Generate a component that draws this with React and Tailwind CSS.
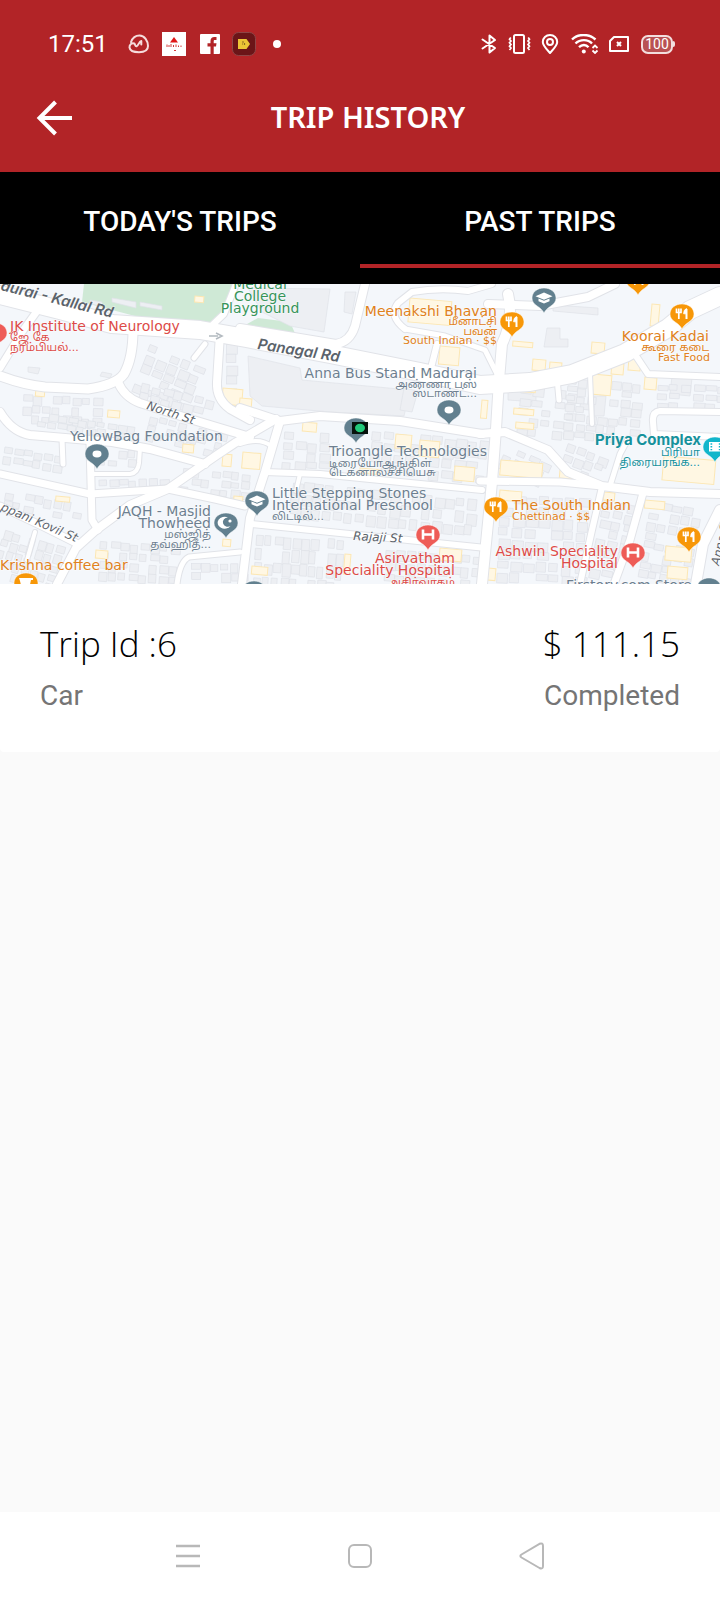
import React from "react";

const ROAD_PATHS = [
  { d: "M45 16 L22 48 L0 84", w: 8 },
  { d: "M0 92 Q24 101 45 103 L88 105 Q116 101 124 90 Q133 74 133 46", w: 10 },
  { d: "M118 98 Q124 113 140 119 L190 135 L250 153", w: 9 },
  { d: "M0 128 Q12 148 30 151 L112 158 L150 165 L205 180", w: 9 },
  { d: "M62 155 L63 180", w: 6 },
  { d: "M92 190 L130 190 Q138 189 139 179 L140 164", w: 5 },
  { d: "M0 190 L90 210 L168 205 L215 215 L245 222", w: 8 },
  { d: "M90 160 L92 236 L98 246", w: 8 },
  { d: "M57 300 L76 264 L96 246 L130 221 L168 205 L217 171 L235 159 L276 135", w: 9 },
  { d: "M0 222 L44 243 L78 260", w: 8 },
  { d: "M35 248 L27 276", w: 5 },
  { d: "M177 300 Q180 277 189 273 L240 268", w: 6 },
  { d: "M220 50 L217 98 Q216 115 230 125 L250 136", w: 9 },
  { d: "M205 60 L194 74", w: 6 },
  { d: "M205 48 L224 30 L236 0", w: 7 },
  { d: "M365 0 L355 42 Q350 58 336 60 L240 44", w: 9 },
  { d: "M240 124 L280 137 L320 132 L400 137 L482 150", w: 9 },
  { d: "M280 137 L265 188 L250 234 L242 300", w: 9 },
  { d: "M240 160 Q260 153 271 162", w: 5 },
  { d: "M265 188 L320 190 L400 198 L482 206", w: 7 },
  { d: "M252 240 L330 248 L486 264", w: 7 },
  { d: "M300 190 L296 207", w: 5 },
  { d: "M437 60 L430 88", w: 7 },
  { d: "M405 45 Q388 32 398 19 L412 8 Q440 3 468 7 L492 0", w: 7 },
  { d: "M405 45 L445 52 L485 66 L500 96", w: 6 },
  { d: "M508 10 Q514 35 502 60 L499 96 L496 145 L492 198 L482 300", w: 11 },
  { d: "M488 20 L540 22 L588 13 L615 0", w: 9 },
  { d: "M480 150 L505 148 L548 166 L568 188 L602 202 L650 208 L720 210", w: 9 },
  { d: "M480 197 L560 198 L602 202", w: 8 },
  { d: "M602 203 L592 246 L580 300", w: 7 },
  { d: "M643 209 L630 256 L614 300", w: 8 },
  { d: "M610 202 L620 170 L628 155", w: 6 },
  { d: "M557 94 L559 116", w: 6 },
  { d: "M590 90 L592 140", w: 5 },
  { d: "M720 128 L660 127 Q652 128 653 138 L654 150 L720 153", w: 7 },
  { d: "M636 72 L648 90 L720 93", w: 7 },
  { d: "M720 226 L703 260 L696 300", w: 11 },
];

const MAIN_ROAD =
  "M0 11 L60 26 L112 40 L200 46 L246 54 L330 70 L420 88 L480 101 L530 98 L572 90 L625 69 L668 44 L690 26 L720 12";

const BLOCKS = [
  { x: 22, y: 110, cols: 8, rows: 3, w: 10, h: 10, a: 2 },
  { x: 38, y: 128, cols: 10, rows: 2, w: 10, h: 8, a: 8 },
  { x: 4, y: 162, cols: 6, rows: 2, w: 10, h: 9, a: 8 },
  { x: 98, y: 164, cols: 4, rows: 2, w: 10, h: 9, a: 4 },
  { x: 98, y: 196, cols: 7, rows: 1, w: 10, h: 9, a: -2 },
  { x: 5, y: 206, cols: 8, rows: 2, w: 10, h: 10, a: 10 },
  { x: 150, y: 60, cols: 5, rows: 5, w: 12, h: 10, a: 22 },
  { x: 142, y: 98, cols: 7, rows: 2, w: 11, h: 10, a: 14 },
  { x: 150, y: 130, cols: 8, rows: 3, w: 10, h: 9, a: 14 },
  { x: 182, y: 182, cols: 7, rows: 3, w: 10, h: 9, a: 6 },
  { x: 225, y: 58, cols: 1, rows: 6, w: 12, h: 11, a: 0 },
  { x: 100, y: 256, cols: 8, rows: 4, w: 10, h: 10, a: 4 },
  { x: 4, y: 245, cols: 7, rows: 5, w: 9, h: 10, a: 16 },
  { x: 190, y: 278, cols: 6, rows: 2, w: 10, h: 10, a: 0 },
  { x: 284, y: 146, cols: 4, rows: 4, w: 12, h: 10, a: 4 },
  { x: 292, y: 196, cols: 17, rows: 3, w: 11, h: 13, a: 6 },
  { x: 256, y: 249, cols: 10, rows: 4, w: 9, h: 14, a: 4 },
  { x: 385, y: 264, cols: 9, rows: 3, w: 11, h: 12, a: 5 },
  { x: 372, y: 145, cols: 10, rows: 4, w: 12, h: 11, a: 6 },
  { x: 520, y: 102, cols: 6, rows: 5, w: 12, h: 10, a: 6 },
  { x: 567, y: 92, cols: 7, rows: 7, w: 11, h: 9, a: 5 },
  { x: 645, y: 98, cols: 7, rows: 3, w: 12, h: 9, a: 3 },
  { x: 568, y: 158, cols: 4, rows: 3, w: 11, h: 10, a: 20 },
  { x: 500, y: 210, cols: 7, rows: 8, w: 13, h: 11, a: 3 },
  { x: 604, y: 214, cols: 3, rows: 8, w: 12, h: 10, a: 12 },
  { x: 650, y: 216, cols: 5, rows: 8, w: 11, h: 10, a: 10 },
  { x: 508, y: 160, cols: 4, rows: 3, w: 12, h: 9, a: 24 },
];

const YELLOW = [
  [36, 104, 9, 8], [108, 126, 12, 7], [183, 160, 11, 8], [56, 212, 14, 5],
  [96, 266, 12, 8], [223, 104, 20, 16], [223, 170, 9, 12], [234, 212, 9, 10],
  [223, 255, 8, 7], [195, 12, 9, 6], [240, 114, 12, 9], [303, 138, 14, 9],
  [243, 168, 18, 16], [410, 14, 42, 24], [440, 62, 20, 18], [396, 150, 16, 14],
  [420, 156, 20, 16], [345, 270, 6, 20], [252, 282, 16, 8], [440, 264, 22, 12],
  [455, 182, 20, 14], [513, 57, 20, 5], [533, 75, 13, 11], [550, 78, 12, 8],
  [592, 58, 13, 11], [516, 98, 20, 9], [514, 124, 20, 6], [516, 138, 18, 6],
  [592, 90, 20, 20], [612, 79, 12, 11], [629, 74, 12, 12], [645, 93, 12, 12],
  [501, 176, 42, 15], [500, 206, 22, 10], [482, 116, 6, 18], [664, 172, 52, 24],
  [645, 216, 20, 8], [604, 208, 11, 8], [666, 262, 26, 14], [488, 284, 8, 12],
  [652, 20, 8, 22], [560, 186, 12, 8], [668, 282, 20, 12], [360, 184, 20, 5],
];

const LARGE_BUILDINGS = [
  "M248 4 L330 5 L324 48 L290 42 L262 28 Z",
  "M248 72 L300 84 L302 96 L410 106 L404 132 L330 128 L262 122 L250 112 Z",
  "M345 8 L356 8 L352 30 L344 28 Z",
  "M404 104 L418 107 L412 128 L400 126 Z",
  "M553 21 L598 24 L598 31 L553 27 Z",
  "M547 44 L560 44 L560 55 L568 55 L568 63 L544 63 Z",
  "M508 106 L536 108 L536 118 L508 116 Z",
  "M594 112 L606 112 L604 132 L594 132 Z",
  "M672 92 L692 94 L690 112 L670 110 Z",
  "M90 16 L102 18 L102 22 L90 20 Z M112 14 L136 18 L136 24 L112 18 Z M140 18 L162 22 L162 26 L140 22 Z",
  "M28 83 L40 84 L38 90 L28 88 Z M102 88 L112 90 L110 94 L100 92 Z",
];

const PINS = [
  { x: 97, y: 185, color: "#62808f", icon: "dot" },
  { x: 226, y: 254, color: "#62808f", icon: "crescent" },
  { x: 257, y: 232, color: "#62808f", icon: "cap" },
  { x: 356, y: 159, color: "#62808f", icon: "none" },
  { x: 449, y: 141, color: "#62808f", icon: "dot" },
  { x: 428, y: 266, color: "#ee5c57", icon: "hospital" },
  { x: 512, y: 53, color: "#f79708", icon: "food" },
  { x: 544, y: 29, color: "#62808f", icon: "cap" },
  { x: 682, y: 45, color: "#f79708", icon: "food" },
  { x: 638, y: 11, color: "#f79708", icon: "food" },
  { x: 715, y: 178, color: "#12b5cb", icon: "film" },
  { x: 496, y: 238, color: "#f79708", icon: "food" },
  { x: 633, y: 284, color: "#ee5c57", icon: "hospital" },
  { x: 689, y: 268, color: "#f79708", icon: "food" },
  { x: 26, y: 314, color: "#f79708", icon: "cup" },
  { x: -5, y: 64, color: "#ee5c57", icon: "dot" },
  { x: 254, y: 322, color: "#62808f", icon: "none" },
  { x: 709, y: 319, color: "#62808f", icon: "none" },
];

const RED = "#dd4b48";
const ORANGE = "#e08120";
const SLATE = "#6d7f90";
const GREEN = "#37945a";
const TEAL = "#16919c";
const ROAD_TEXT = "#5b636b";

const LABELS = [
  { t: "JK Institute of Neurology", x: 10, y: 47, c: RED },
  { t: "ஜே கே", x: 10, y: 57, c: RED, s: "sm" },
  { t: "நரம்பியல்...", x: 10, y: 67, c: RED, s: "sm" },
  { t: "Medical", x: 260, y: 5, c: GREEN, a: "middle" },
  { t: "College", x: 260, y: 17, c: GREEN, a: "middle" },
  { t: "Playground", x: 260, y: 29, c: GREEN, a: "middle" },
  { t: "Meenakshi Bhavan", x: 497, y: 32, c: ORANGE, a: "end" },
  { t: "மீனாட்சி", x: 497, y: 41, c: ORANGE, a: "end", s: "sm" },
  { t: "பவன்", x: 497, y: 51, c: ORANGE, a: "end", s: "sm" },
  { t: "South Indian · $$", x: 497, y: 60, c: ORANGE, a: "end", s: "sm" },
  { t: "Anna Bus Stand Madurai", x: 477, y: 94, c: SLATE, a: "end" },
  { t: "அண்ணா பஸ்", x: 477, y: 104, c: SLATE, a: "end", s: "sm" },
  { t: "ஸ்டாண்ட்...", x: 477, y: 113, c: SLATE, a: "end", s: "sm" },
  { t: "Koorai Kadai", x: 709, y: 57, c: ORANGE, a: "end" },
  { t: "கூரை கடை", x: 709, y: 67, c: ORANGE, a: "end", s: "sm" },
  { t: "Fast Food", x: 710, y: 77, c: ORANGE, a: "end", s: "sm" },
  { t: "YellowBag Foundation", x: 70, y: 157, c: SLATE },
  { t: "Trioangle Technologies", x: 329, y: 172, c: SLATE },
  { t: "டிரையோஆங்கிள்", x: 329, y: 183, c: SLATE, s: "sm" },
  { t: "டெக்னாலச்சியெசு", x: 329, y: 192, c: SLATE, s: "sm" },
  { t: "Priya Complex", x: 701, y: 161, c: TEAL, a: "end", b: true },
  { t: "பிரியா", x: 700, y: 172, c: TEAL, a: "end", s: "sm" },
  { t: "திரையரங்க...", x: 700, y: 182, c: TEAL, a: "end", s: "sm" },
  { t: "Little Stepping Stones", x: 272, y: 214, c: SLATE },
  { t: "International Preschool", x: 272, y: 226, c: SLATE },
  { t: "லிட்டில்...", x: 272, y: 236, c: SLATE, s: "sm" },
  { t: "JAQH - Masjid", x: 211, y: 232, c: SLATE, a: "end" },
  { t: "Thowheed", x: 211, y: 244, c: SLATE, a: "end" },
  { t: "மஸ்ஜித்", x: 211, y: 254, c: SLATE, a: "end", s: "sm" },
  { t: "தவ்ஹித்...", x: 211, y: 264, c: SLATE, a: "end", s: "sm" },
  { t: "The South Indian", x: 512, y: 226, c: ORANGE },
  { t: "Chettinad · $$", x: 512, y: 236, c: ORANGE, s: "sm" },
  { t: "Ashwin Speciality", x: 618, y: 272, c: RED, a: "end" },
  { t: "Hospital", x: 618, y: 284, c: RED, a: "end" },
  { t: "Asirvatham", x: 455, y: 279, c: RED, a: "end" },
  { t: "Speciality Hospital", x: 455, y: 291, c: RED, a: "end" },
  { t: "அசிர்வாதம்", x: 455, y: 302, c: RED, a: "end", s: "sm" },
  { t: "Krishna coffee bar", x: 0, y: 286, c: ORANGE },
  { t: "Firstory.com Store", x: 692, y: 306, c: SLATE, a: "end" },
  { t: "durai - Kallal Rd", x: 0, y: 6, c: ROAD_TEXT, r: 14, b: true },
  { t: "Panagal Rd", x: 257, y: 65, c: ROAD_TEXT, r: 9, b: true },
  { t: "North St", x: 146, y: 125, c: ROAD_TEXT, r: 18, s: "md" },
  { t: "ppani Kovil St", x: 0, y: 226, c: ROAD_TEXT, r: 23, s: "md" },
  { t: "Rajaji St", x: 353, y: 256, c: ROAD_TEXT, r: 3, s: "md" },
  { t: "Anna Salai", x: 719, y: 282, c: ROAD_TEXT, r: -76, s: "md" },
];

// Small deterministic hash so the building footprints vary in size without changing between renders.
function noise(a, b, c) {
  const v = Math.sin(a * 12.9898 + b * 78.233 + c * 37.719) * 43758.5453;
  return v - Math.floor(v);
}

function BuildingBlock({ block, seed }) {
  const items = [];
  for (let r = 0; r < block.rows; r++) {
    for (let c = 0; c < block.cols; c++) {
      const n = noise(seed, r, c);
      if (n < 0.14) continue;
      items.push(
        <rect
          key={`${r}-${c}`}
          x={c * block.w + n * 2}
          y={r * block.h + noise(c, seed, r) * 3}
          width={block.w * (0.6 + n * 0.35)}
          height={block.h * (0.55 + noise(r, c, seed) * 0.4)}
        />
      );
    }
  }
  return <g transform={`translate(${block.x} ${block.y}) rotate(${block.a})`}>{items}</g>;
}

function PinGlyph({ icon }) {
  if (icon === "dot") return <ellipse cx="0" cy="-15" rx="4.5" ry="3.4" fill="#fff" />;
  if (icon === "hospital")
    return <path d="M-5 -20.5 V-10.5 M5 -20.5 V-10.5 M-5 -15.5 H5" stroke="#fff" strokeWidth="2.6" fill="none" />;
  if (icon === "cap")
    return (
      <g fill="#fff">
        <path d="M0 -20.5 L8.5 -16.8 L0 -13.2 L-8.5 -16.8 Z" />
        <path d="M-5.5 -14.6 L0 -12.2 L5.5 -14.6 V-11.8 L0 -9.4 L-5.5 -11.8 Z" />
      </g>
    );
  if (icon === "crescent")
    return (
      <g>
        <path d="M4.5 -12 A7 6 0 1 1 2 -20.5 A5 4.6 0 1 0 4.5 -12 Z" fill="#fff" />
        <circle cx="4" cy="-17" r="1.6" fill="#fff" />
      </g>
    );
  if (icon === "food")
    return (
      <g stroke="#fff" fill="none">
        <path d="M-5.5 -20.5 V-16.5 H-1 V-20.5 M-3.2 -20.5 V-10" strokeWidth="1.7" />
        <path d="M4.5 -10 V-20" strokeWidth="2" />
        <path d="M4.5 -20.5 Q1.6 -19.4 1.6 -15.2 H4.5 Z" fill="#fff" strokeWidth="0.8" />
      </g>
    );
  if (icon === "film")
    return (
      <g>
        <path d="M-6 -20 H7 V-10.5 H-6 Z" fill="#fff" />
        <path d="M-4.5 -18 H-2.8 M-4.5 -15.2 H-2.8 M-4.5 -12.4 H-2.8 M3.8 -18 H5.5 M3.8 -15.2 H5.5 M3.8 -12.4 H5.5" stroke="#12b5cb" strokeWidth="1.4" />
      </g>
    );
  if (icon === "cup") return <path d="M-7 -20 H7 V-18 H5 L3 -9 H-4 L-6 -17 Z" fill="#fff" />;
  return null;
}

function Pin({ x, y, color, icon }) {
  return (
    <g transform={`translate(${x} ${y})`}>
      <path
        d="M0 0 C-1.2 -2.6 -3.4 -4.6 -6.6 -6.8 C-10.2 -9.2 -12 -11.6 -12 -15 C-12 -20.8 -6.8 -25 0 -25 C6.8 -25 12 -20.8 12 -15 C12 -11.6 10.2 -9.2 6.6 -6.8 C3.4 -4.6 1.2 -2.6 0 0 Z"
        fill={color}
        stroke="#fff"
        strokeOpacity="0.6"
        strokeWidth="0.8"
      />
      <PinGlyph icon={icon} />
    </g>
  );
}

function labelClass(label) {
  if (label.s === "sm") return "text-[11px] font-normal";
  if (label.s === "md") return "text-[12px] font-normal italic";
  if (label.r) return "text-[15px] font-semibold italic";
  return label.b ? "text-[15px] font-bold" : "text-[14px] font-normal";
}

function labelFont(label) {
  if (label.b) return "font-['Inter','Noto_Sans_Tamil',sans-serif]";
  return "font-['DejaVu_Sans','Noto_Sans_Tamil',sans-serif]";
}

function TripMap() {
  return (
    <svg
      viewBox="0 0 720 300"
      preserveAspectRatio="xMidYMid slice"
      role="img"
      aria-label="Map of the trip location"
      className="block h-[300px] w-full bg-[#f1f4f9]"
    >
      <rect width="720" height="300" fill="#f4f7fb" />
      <path d="M84 0 H238 L214 45 L150 36 L82 18 Z" fill="#cfe9d6" />
      <path d="M258 34 L290 38 L298 56 L240 44 Z" fill="#cfe9d6" />
      <g fill="#edeff3" stroke="#dfe2e8" strokeWidth="0.7">
        {LARGE_BUILDINGS.map((d) => (
          <path key={d} d={d} />
        ))}
        {BLOCKS.map((block, i) => (
          <BuildingBlock key={i} block={block} seed={i + 1} />
        ))}
      </g>
      <g fill="#fff7e3" stroke="#fce7b4" strokeWidth="1">
        {YELLOW.map(([x, y, w, h]) => (
          <rect key={`${x}-${y}`} x={x} y={y} width={w} height={h} transform={`rotate(5 ${x} ${y})`} />
        ))}
      </g>
      <g fill="none" strokeLinejoin="round" strokeLinecap="round">
        {ROAD_PATHS.map((road) => (
          <path key={road.d} d={road.d} stroke="#e1e3e8" strokeWidth={road.w + 1} />
        ))}
        <path d={MAIN_ROAD} stroke="#e1e3e8" strokeWidth="20" />
        {ROAD_PATHS.map((road) => (
          <path key={road.d} d={road.d} stroke="#ffffff" strokeWidth={road.w - 1} />
        ))}
        <path d={MAIN_ROAD} stroke="#ffffff" strokeWidth="18" />
      </g>
      <path d="M209 52 H218 M216 49 L222 52 L216 55" stroke="#b3bac0" strokeWidth="1.6" fill="none" />
      {PINS.map((pin) => (
        <Pin key={`${pin.x}-${pin.y}`} {...pin} />
      ))}
      <rect x="352" y="138" width="16" height="12" fill="#06120c" />
      <ellipse cx="360" cy="144" rx="5" ry="4.2" fill="#22c97a" />
      {LABELS.map((label) => (
        <text
          key={label.t}
          x={label.x}
          y={label.y}
          textAnchor={label.a || "start"}
          fill={label.c}
          stroke="#ffffff"
          strokeWidth="1"
          strokeOpacity="0.7"
          paintOrder="stroke"
          transform={label.r ? `rotate(${label.r} ${label.x} ${label.y})` : undefined}
          className={`${labelClass(label)} ${labelFont(label)}`}
        >
          {label.t}
        </text>
      ))}
    </svg>
  );
}

function StatusBar() {
  return (
    <div className="flex h-[88px] items-center justify-between pr-[45px] pl-12 text-white">
      <div className="flex items-center">
        <span className="w-20 font-['Roboto',sans-serif] text-[24px] leading-8">17:51</span>
        <svg viewBox="0 0 22 20" className="h-5 w-[22px]" fill="none" stroke="#f6dcdc" strokeWidth="2" strokeLinecap="round" strokeLinejoin="round">
          <path d="M3 8 C4.500 4 7.500 1.500 11.500 1.500 C16.500 1.500 20 7 20 12 C20 16.500 16 18.200 11 18.200 C6 18.200 2 16.800 1.500 13.500 C1.200 10.500 4 8.500 6.200 9.500 C7.500 10.200 6.800 12.800 8.800 12.200 C10.500 11.500 11 7.500 13.300 7 V10.500" />
        </svg>
        <svg viewBox="0 0 24 24" className="ml-3 size-6">
          <rect width="24" height="24" fill="#fff" />
          <path d="M12 5 L16 10.500 H8 Z" fill="#e01818" />
          <path d="M5 12.500 V15 M7 13 V15 M9 12 V15 M11.500 13 V15 M14 12.500 V15 M16.500 13.500 V15 M19 13.500 V15 M12 18.500 H14" stroke="#d23a3a" strokeWidth="1" />
        </svg>
        <svg viewBox="0 0 20 20" className="ml-3.5 size-5">
          <rect width="20" height="20" rx="1" fill="#fff" />
          <path d="M10.500 20 V12.500 H7.500 V9.300 H10.500 V7 C10.500 4.200 12 3 14.300 3 H16.500 V6 H15 C14 6 13.700 6.500 13.700 7.400 V9.300 H16.500 L16 12.500 H13.700 V20 Z" fill="#b22427" />
        </svg>
        <svg viewBox="0 0 24 24" className="ml-3 size-6">
          <rect x="0.500" y="0.500" width="23" height="23" rx="6" fill="#6b1518" stroke="#8d4546" />
          <path d="M6 7 H14.500 L18 12 L14.500 17 H6 Z" fill="#edc536" />
          <path d="M10 10 H12 M10 12 H11 M12.500 11 V13" stroke="#8f6b20" strokeWidth="1.200" />
        </svg>
        <span className="ml-[17px] size-2 rounded-full bg-white" />
      </div>
      <div className="flex items-center">
        <svg viewBox="0 0 16 20" className="h-5 w-4" fill="none" stroke="#fff" strokeWidth="2" strokeLinejoin="round" strokeLinecap="round">
          <path d="M1.500 5.500 L14 14 L8.500 18.500 V1.500 L14 6 L1.500 14.500" />
        </svg>
        <svg viewBox="0 0 24 20" className="ml-2.5 h-5 w-6" fill="none" stroke="#fff">
          <rect x="7" y="1" width="10" height="18" rx="1.500" strokeWidth="2" />
          <path d="M3.800 3.500 L2.500 5.300 L4 7 L2.500 8.700 L4 10.400 L2.500 12.200 L4 14 L2.500 16 M21.200 3.500 L22.500 5.300 L21 7 L22.500 8.700 L21 10.400 L22.500 12.200 L21 14 L22.500 16" strokeWidth="1.700" />
        </svg>
        <svg viewBox="0 0 18 20" className="ml-2.5 h-5 w-[18px]" fill="none" stroke="#fff" strokeWidth="2">
          <path d="M9 19 C5 14.500 1.800 11.500 1.800 8 C1.800 4 5 1 9 1 C13 1 16.200 4 16.200 8 C16.200 11.500 13 14.500 9 19 Z" />
          <circle cx="9" cy="8" r="3" />
        </svg>
        <svg viewBox="0 0 28 20" className="ml-3 h-5 w-7" fill="none" stroke="#fff" strokeWidth="2.400">
          <path d="M1 5.500 C7 -0.500 18 -0.500 24.500 5.500 M4.500 9.500 C9 5 17 5 21 9.500 M8 13.200 C11 10.300 15 10.300 17.500 13.200" />
          <circle cx="12.800" cy="17.500" r="2" fill="#fff" stroke="none" />
          <path d="M21.500 14 L24 11.500 L26.500 14 M21.500 16.500 L24 19 L26.500 16.500" strokeWidth="1.800" />
        </svg>
        <svg viewBox="0 0 20 16" className="ml-2.5 h-4 w-5" fill="none" stroke="#fff" strokeWidth="2">
          <path d="M5 1 H19 V15 H1 V5 Z" strokeLinejoin="round" />
          <path d="M8 6 L12 10 M12 6 L8 10" />
        </svg>
        <div className="ml-3 flex items-center">
          <span className="flex h-[19px] w-8 items-center justify-center rounded-[7px] border-2 border-[#f3dede] bg-[#b95153] font-['Roboto',sans-serif] text-[14px] leading-none">
            100
          </span>
          <span className="h-1.5 w-0.5 rounded-r bg-[#f3dede]" />
        </div>
      </div>
    </div>
  );
}

export default function App() {
  return (
    <div className="flex min-h-screen flex-col bg-[#fafafa]">
      <header className="bg-[#b22427]">
        <StatusBar />
        <div className="grid h-[84px] grid-cols-[72px_1fr_56px] items-start">
          <button type="button" aria-label="Back" className="flex h-[60px] items-center justify-end">
            <svg viewBox="0 0 36 36" className="size-9" fill="none" stroke="#fff" strokeWidth="4">
              <path d="M19.500 2 L3.500 18 L19.500 34 M3 18 H36" />
            </svg>
          </button>
          <h1 className="text-center font-['Noto_Sans','Open_Sans',sans-serif] text-[29px] leading-[58px] font-semibold text-white">
            TRIP HISTORY
          </h1>
        </div>
      </header>

      <div role="tablist" className="grid h-28 grid-cols-2 bg-black font-['Roboto',sans-serif] text-[28px] font-medium text-white">
        <button type="button" role="tab" aria-selected="false" className="h-24 border-b-4 border-transparent pt-2">
          TODAY&apos;S TRIPS
        </button>
        <button type="button" role="tab" aria-selected="true" className="h-24 border-b-4 border-[#b22427] pt-2">
          PAST TRIPS
        </button>
      </div>

      <main className="grow">
        <article className="overflow-hidden rounded-b bg-white">
          <TripMap />
          <div className="px-10 pt-9 pb-9">
            <div className="flex items-center justify-between font-['Open_Sans','Noto_Sans',sans-serif] text-[35px] leading-[48px] font-light text-black">
              <span>Trip Id :6</span>
              <span>$ 111.15</span>
            </div>
            <div className="flex items-center justify-between pt-2 font-['Roboto',sans-serif] text-[28px] leading-10 text-[#757575]">
              <span>Car</span>
              <span>Completed</span>
            </div>
          </div>
        </article>
      </main>

      <nav className="grid h-[88px] grid-cols-[1fr_172px_172px_172px_1fr] items-center bg-white">
        <span />
        <button type="button" aria-label="Recent apps" className="flex justify-center">
          <svg viewBox="0 0 24 24" className="size-6" fill="none" stroke="#b8b8b8" strokeWidth="2.500">
            <path d="M0 2 H24 M0 12 H24 M0 22 H24" />
          </svg>
        </button>
        <button type="button" aria-label="Home" className="flex justify-center">
          <svg viewBox="0 0 24 24" className="size-6" fill="none" stroke="#b8b8b8" strokeWidth="2">
            <rect x="1" y="1" width="22" height="22" rx="5" />
          </svg>
        </button>
        <button type="button" aria-label="Back to previous screen" className="flex justify-center">
          <svg viewBox="0 0 26 28" className="h-7 w-[26px]" fill="none" stroke="#b8b8b8" strokeWidth="2" strokeLinejoin="round">
            <path d="M2.500 12.500 L20.500 1.800 Q24 0.500 24 4 V24 Q24 27.500 20.500 26 L2.500 15.500 Q0.200 14 2.500 12.500 Z" />
          </svg>
        </button>
      </nav>
    </div>
  );
}
